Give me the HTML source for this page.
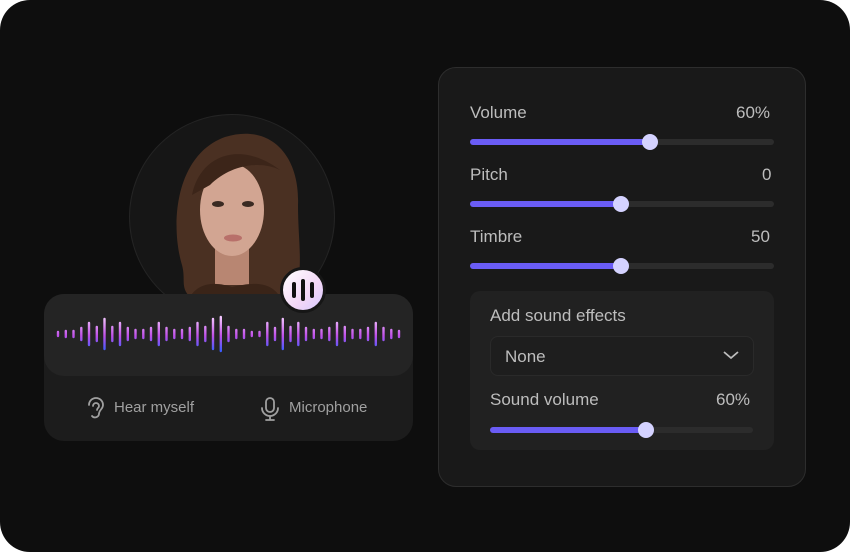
<!DOCTYPE html><html><head><style>
body{margin:0;width:850px;height:552px;background:#fff;font-family:"Liberation Sans",sans-serif;overflow:hidden}
.bg{position:absolute;left:0;top:0;width:850px;height:552px;background:#0e0e0e;border-radius:30px}
.abs{position:absolute}
.lbl{position:absolute;color:#bdbdbd;font-size:17px}
.track{position:absolute;height:6px;border-radius:3px;background:#2c2c2c}
.fill{position:absolute;left:0;top:0;height:6px;border-radius:3px;background:#6a5cf5}
.thumb{position:absolute;top:-5px;width:16px;height:16px;border-radius:50%;background:#d4d2ff}
</style></head><body>
<div class="bg"></div>
<!-- portrait -->
<div class="abs" style="left:129px;top:114px;width:204px;height:204px;border-radius:50%;background:#161616;border:1px solid #242424;overflow:hidden">
<svg width="204" height="204">
 <path d="M52 150 C40 110 45 40 95 22 C140 8 170 40 168 90 C168 130 175 160 162 182 L60 182 C50 172 56 165 52 150Z" fill="#4a3022"/>
 <rect x="85" y="120" width="34" height="50" fill="#b88672"/>
 <ellipse cx="102" cy="95" rx="32" ry="46" fill="#d2a592"/>
 <path d="M62 80 C70 40 110 25 150 55 C130 45 100 50 80 70Z" fill="#3c2519"/>
 <path d="M60 182 C70 165 90 168 102 172 C120 168 140 165 150 182Z" fill="#3a2418"/>
 <ellipse cx="88" cy="89" rx="6" ry="3" fill="#3a2a22"/><ellipse cx="118" cy="89" rx="6" ry="3" fill="#3a2a22"/>
 <ellipse cx="103" cy="123" rx="9" ry="3.5" fill="#b8706a"/>
</svg>
</div>
<!-- left panel -->
<div class="abs" style="left:44px;top:294px;width:369px;height:147px;border-radius:20px;background:#1c1c1c"></div>
<div class="abs" style="left:44px;top:294px;width:369px;height:82px;border-radius:20px;background:#242424"></div>
<svg class="abs" style="left:44px;top:294px" width="369" height="82">
<defs><linearGradient id="g" gradientUnits="userSpaceOnUse" x1="0" y1="23" x2="0" y2="57"><stop offset="0" stop-color="#f4c9ff"/><stop offset="0.55" stop-color="#c050e8"/><stop offset="1" stop-color="#3a5cff"/></linearGradient></defs>
<g stroke="url(#g)" stroke-width="2.4" stroke-linecap="round">
<line x1="14" x2="14" y1="38" y2="42"/><line x1="21.8" x2="21.8" y1="37" y2="43"/><line x1="29.5" x2="29.5" y1="37" y2="43"/><line x1="37.3" x2="37.3" y1="34" y2="46"/><line x1="45" x2="45" y1="29" y2="51"/><line x1="52.8" x2="52.8" y1="33" y2="47"/><line x1="60.5" x2="60.5" y1="25" y2="55"/><line x1="68.3" x2="68.3" y1="33" y2="47"/><line x1="76" x2="76" y1="29" y2="51"/><line x1="83.8" x2="83.8" y1="34" y2="46"/><line x1="91.5" x2="91.5" y1="36" y2="44"/><line x1="99.3" x2="99.3" y1="36" y2="44"/><line x1="107" x2="107" y1="34" y2="46"/><line x1="114.8" x2="114.8" y1="29" y2="51"/><line x1="122.5" x2="122.5" y1="34" y2="46"/><line x1="130.3" x2="130.3" y1="36" y2="44"/><line x1="138" x2="138" y1="36" y2="44"/><line x1="145.8" x2="145.8" y1="34" y2="46"/><line x1="153.5" x2="153.5" y1="29" y2="51"/><line x1="161.3" x2="161.3" y1="33" y2="47"/><line x1="169" x2="169" y1="25" y2="55"/><line x1="176.8" x2="176.8" y1="23" y2="57"/><line x1="184.5" x2="184.5" y1="33" y2="47"/><line x1="192.3" x2="192.3" y1="36" y2="44"/><line x1="200" x2="200" y1="36" y2="44"/><line x1="207.8" x2="207.8" y1="38" y2="42"/><line x1="215.5" x2="215.5" y1="38" y2="42"/><line x1="223.3" x2="223.3" y1="29" y2="51"/><line x1="231" x2="231" y1="34" y2="46"/><line x1="238.8" x2="238.8" y1="25" y2="55"/><line x1="246.5" x2="246.5" y1="33" y2="47"/><line x1="254.3" x2="254.3" y1="29" y2="51"/><line x1="262" x2="262" y1="34" y2="46"/><line x1="269.8" x2="269.8" y1="36" y2="44"/><line x1="277.5" x2="277.5" y1="36" y2="44"/><line x1="285.3" x2="285.3" y1="34" y2="46"/><line x1="293" x2="293" y1="29" y2="51"/><line x1="300.8" x2="300.8" y1="33" y2="47"/><line x1="308.5" x2="308.5" y1="36" y2="44"/><line x1="316.3" x2="316.3" y1="36" y2="44"/><line x1="324" x2="324" y1="34" y2="46"/><line x1="331.8" x2="331.8" y1="29" y2="51"/><line x1="339.5" x2="339.5" y1="34" y2="46"/><line x1="347.3" x2="347.3" y1="36" y2="44"/><line x1="355" x2="355" y1="37" y2="43"/>
</g></svg>
<div class="abs" style="left:280px;top:267px;width:40px;height:40px;border-radius:50%;background:linear-gradient(135deg,#fff,#f3d7f7 60%,#d6c8ff);border:3px solid #161616"></div>
<svg class="abs" style="left:283px;top:270px" width="40" height="40"><g stroke="#111" stroke-width="4" stroke-linecap="round"><line x1="11" y1="14" x2="11" y2="26"/><line x1="20" y1="11" x2="20" y2="29"/><line x1="29" y1="14" x2="29" y2="26"/></g></svg>
<svg class="abs" style="left:84px;top:396px" width="24" height="26" fill="none" stroke="#a0a0a0" stroke-width="1.8" stroke-linecap="round"><path d="M5 9a7 7 0 0 1 14 0c0 4-4 5-4 9a4 4 0 0 1-7 2"/><path d="M9 10a3 3 0 0 1 6 0c0 2-2 2-2 4"/></svg>
<div class="lbl" style="left:114px;top:399px;font-size:15px;color:#a0a0a0">Hear myself</div>
<svg class="abs" style="left:260px;top:396px" width="20" height="26" fill="none" stroke="#a0a0a0" stroke-width="1.8" stroke-linecap="round"><rect x="6" y="2" width="8" height="14" rx="4"/><path d="M2 12a8 8 0 0 0 16 0M10 20v4M6 24h8"/></svg>
<div class="lbl" style="left:289px;top:399px;font-size:15px;color:#a0a0a0">Microphone</div>
<!-- right panel -->
<div class="abs" style="left:438px;top:67px;width:366px;height:418px;border-radius:18px;background:#191919;border:1px solid #2d2d2d"></div>
<div class="lbl" style="left:470px;top:103px">Volume</div><div class="lbl" style="left:736px;top:103px">60%</div>
<div class="track" style="left:470px;top:139px;width:304px"><div class="fill" style="width:180px"></div><div class="thumb" style="left:172px"></div></div>
<div class="lbl" style="left:470px;top:165px">Pitch</div><div class="lbl" style="left:762px;top:165px">0</div>
<div class="track" style="left:470px;top:201px;width:304px"><div class="fill" style="width:151px"></div><div class="thumb" style="left:143px"></div></div>
<div class="lbl" style="left:470px;top:227px">Timbre</div><div class="lbl" style="left:751px;top:227px">50</div>
<div class="track" style="left:470px;top:263px;width:304px"><div class="fill" style="width:151px"></div><div class="thumb" style="left:143px"></div></div>
<div class="abs" style="left:470px;top:291px;width:304px;height:159px;border-radius:10px;background:#212121"></div>
<div class="lbl" style="left:490px;top:306px">Add sound effects</div>
<div class="abs" style="left:490px;top:336px;width:262px;height:38px;border-radius:8px;background:#1e1e1e;border:1px solid #2a2a2a"></div>
<div class="lbl" style="left:505px;top:347px">None</div>
<svg class="abs" style="left:722px;top:349px" width="18" height="12" fill="none" stroke="#bdbdbd" stroke-width="1.8"><path d="M2 3l7 6 7-6"/></svg>
<div class="lbl" style="left:490px;top:390px">Sound volume</div><div class="lbl" style="left:716px;top:390px">60%</div>
<div class="track" style="left:490px;top:427px;width:263px"><div class="fill" style="width:156px"></div><div class="thumb" style="left:148px"></div></div>
</body></html>
